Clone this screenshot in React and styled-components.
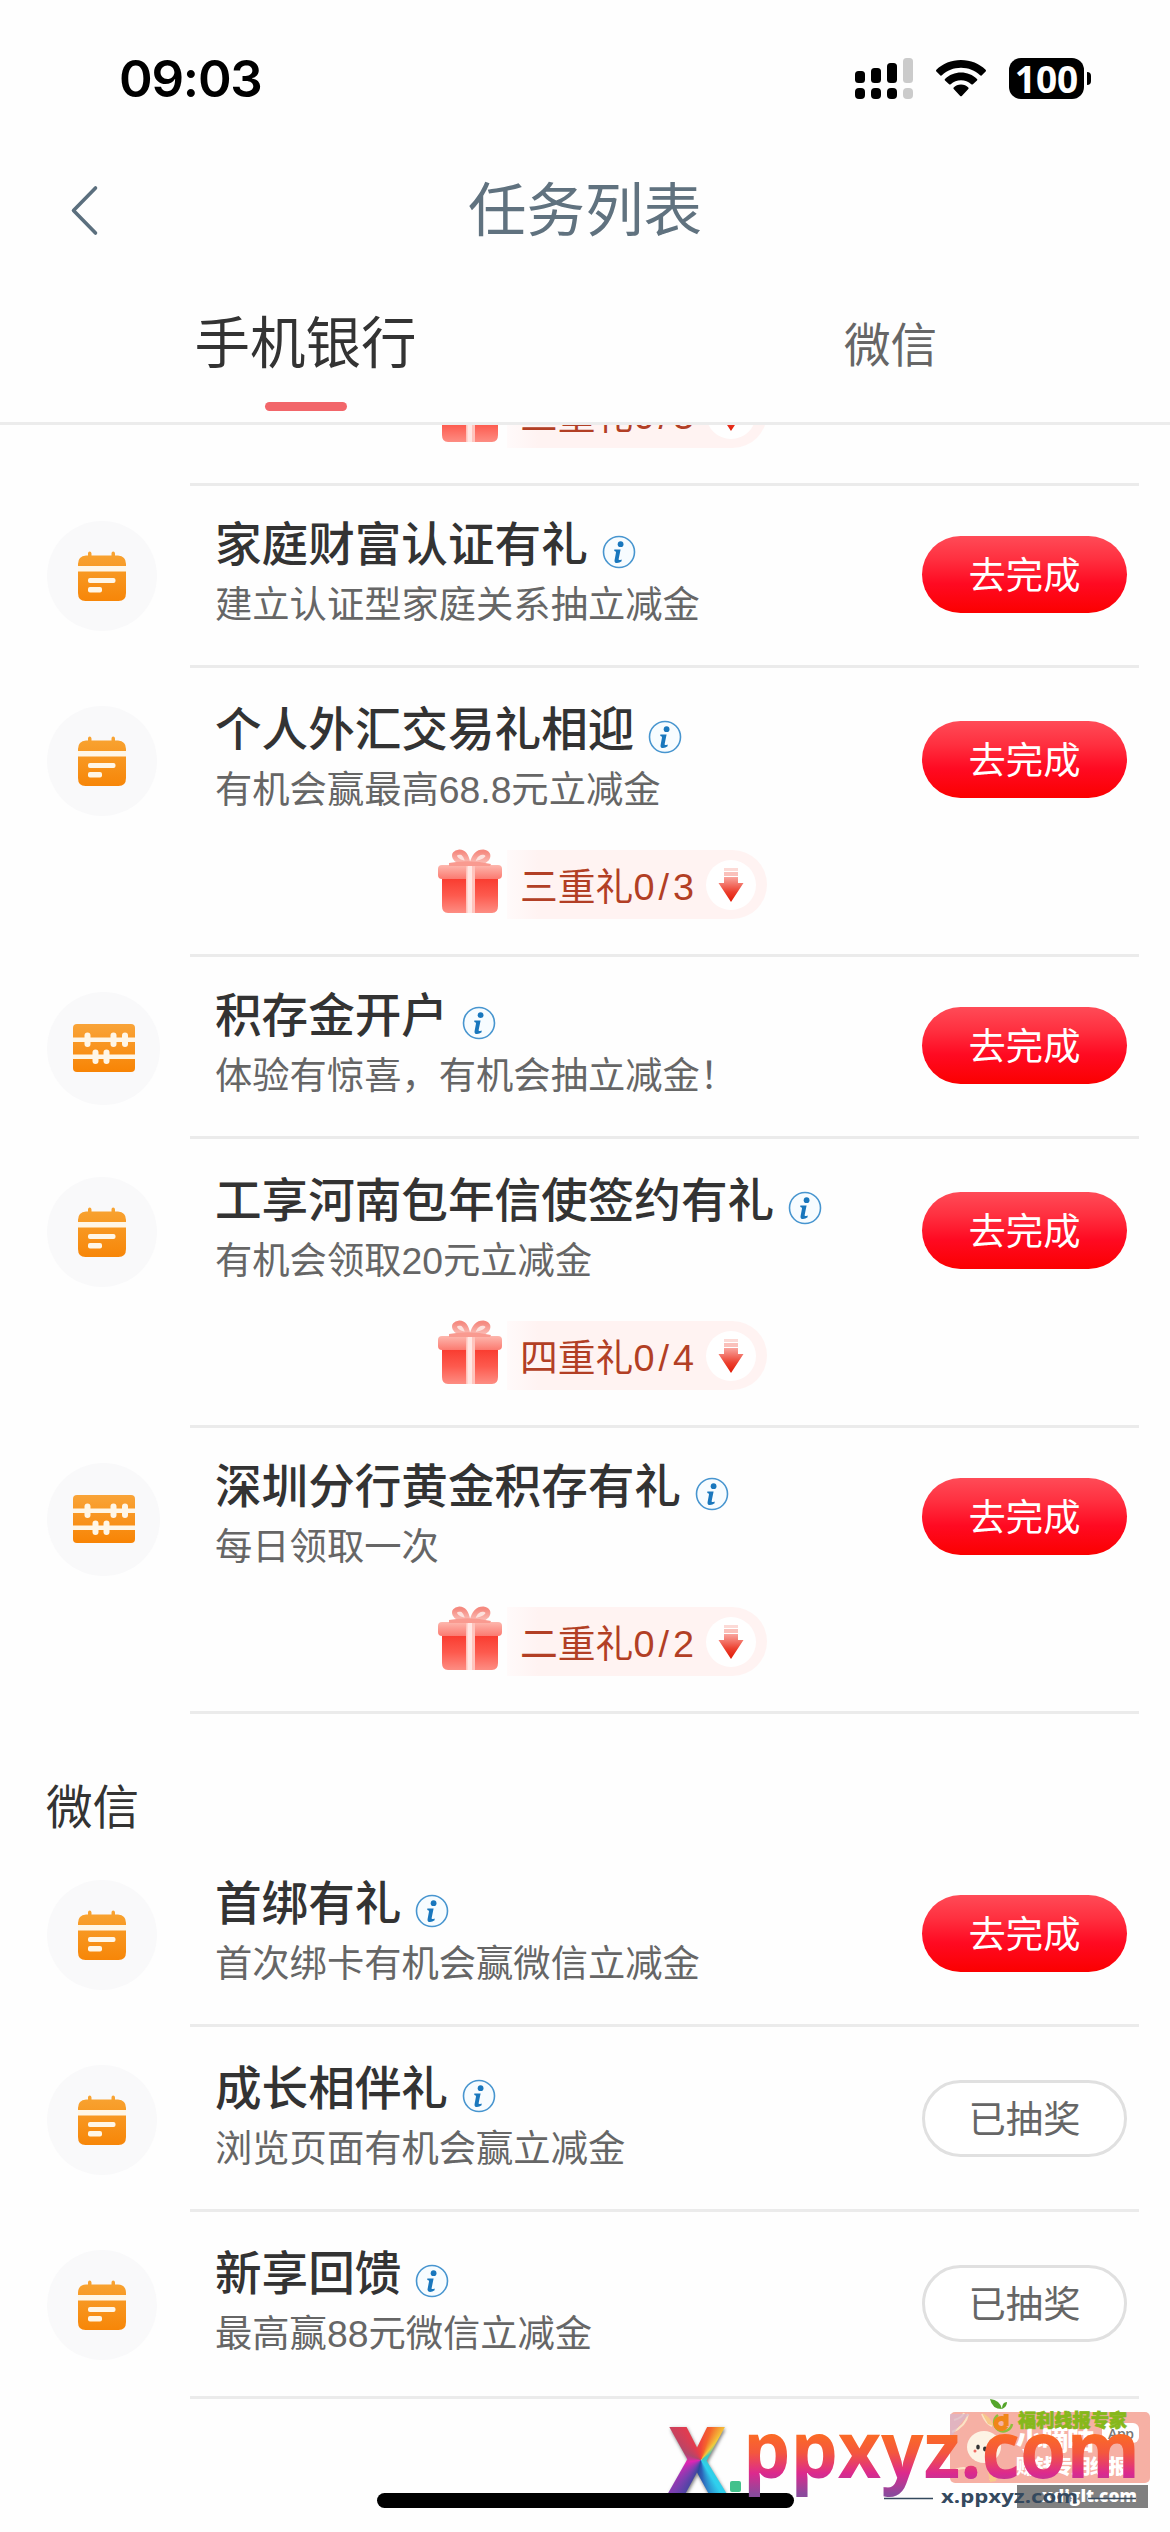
import styled, { createGlobalStyle } from 'styled-components';

const GlobalStyle = createGlobalStyle`
  * {
    box-sizing: border-box;
  }

  body {
    margin: 0;
    background-color: #fefefe;
    font-family: 'Liberation Sans', 'Noto Sans CJK SC', sans-serif;
    color: #333;
  }
`;

const Screen = styled.div`
  position: relative;
  width: 1170px;
  height: 2532px;
  overflow: hidden;
  display: flex;
  flex-direction: column;
  background-color: #fefefe;
`;

const Header = styled.header`
  height: 425px;
  flex-shrink: 0;
  border-bottom: 3px solid #ececec;
`;

const StatusBar = styled.div`
  height: 156px;
  padding: 0 79px 0 119px;
  display: flex;
  align-items: center;
  justify-content: space-between;
`;

const Clock = styled.span`
  font-family: Inter, sans-serif;
  font-size: 51px;
  font-weight: 600;
  letter-spacing: -1.2px;
  color: #000;
`;

const StatusIcons = styled.div`
  display: flex;
  align-items: center;
  gap: 23px;

  svg {
    display: block;
  }
`;

const Battery = styled.div`
  display: flex;
  align-items: center;
  gap: 3px;
`;

const BatteryBody = styled.div`
  width: 75px;
  height: 41px;
  border-radius: 12px;
  background-color: #000;
  color: #fff;
  font-family: 'Open Sans', sans-serif;
  font-size: 37px;
  font-weight: 700;
  line-height: 41px;
  text-align: center;
`;

const BatteryTip = styled.div`
  width: 4px;
  height: 13px;
  border-radius: 0 6px 6px 0;
  background-color: #000;
`;

const NavBar = styled.div`
  height: 110px;
  display: grid;
  grid-template-columns: 1fr auto 1fr;
  align-items: center;
  padding: 0 70px;

  svg {
    margin-bottom: 2px;
  }
`;

const PageTitle = styled.h1`
  margin: 0;
  font-size: 58.5px;
  font-weight: 400;
  line-height: 84px;
  color: #60727f;
`;

const Tabs = styled.div`
  display: flex;
  height: 156px;
  padding: 38px 0 0 13px;
`;

const Tab = styled.div`
  width: 585px;
  flex-shrink: 0;
  display: flex;
  flex-direction: column;
  align-items: center;
  font-size: ${(props) => (props.$active ? '55.5px' : '46.6px')};
  line-height: ${(props) => (props.$active ? '80px' : '85px')};
  color: ${(props) => (props.$active ? '#333' : '#666')};
`;

const TabLine = styled.div`
  width: 82px;
  height: 9px;
  margin-top: 18px;
  border-radius: 5px;
  background-color: #f2666a;
`;

const List = styled.main`
  flex: 1;
  overflow: hidden;
`;

const Row = styled.div`
  display: flex;
`;

const IconColumn = styled.div`
  width: 190px;
  flex-shrink: 0;
  padding: ${(props) => props.$top}px 0 0 47px;
`;

const IconCircle = styled.div`
  width: ${(props) => (props.$wide ? 113 : 110)}px;
  height: ${(props) => (props.$wide ? 113 : 110)}px;
  border-radius: 50%;
  background-color: #f9f9fa;
  display: flex;
  align-items: center;
  justify-content: center;
`;

const RowBody = styled.div`
  flex: 1;
  height: ${(props) => props.$height}px;
  margin-right: 31px;
  padding: ${(props) => props.$top}px 12px 0 25px;
  border-bottom: 3px solid #ebebeb;
`;

const RowMain = styled.div`
  display: flex;
  justify-content: space-between;
  height: 110px;
`;

const TaskName = styled.div`
  display: flex;
  align-items: center;
  gap: 14px;
  height: 54px;
  margin-top: -8px;
  font-size: 46.6px;
  font-weight: 500;
  color: #333;

  svg {
    margin-top: 23px;
  }
`;

const TaskDesc = styled.div`
  margin-top: 6px;
  line-height: 64px;
  font-size: 37.3px;
  color: #666;
`;

const ActionButton = styled.button`
  width: 205px;
  height: 77px;
  margin-top: 15px;
  padding: 0 0 3px;
  border-radius: 39px;
  font-family: inherit;
  font-size: 37.3px;
  border: ${(props) => (props.$done ? '3px solid #e0e0e0' : 'none')};
  color: ${(props) => (props.$done ? '#666' : '#fff')};
  background: ${(props) =>
    props.$done ? '#fff' : 'linear-gradient(180deg, #ff4b57 0%, #ff3040 30%, #ff0a22 62%, #fb0000 100%)'};
`;

const GiftRow = styled.div`
  display: flex;
  align-items: center;
  width: 330px;
  height: 69px;
  margin: ${(props) => props.$top}px 0 0 222px;

  > svg {
    margin-bottom: 5px;
  }
`;

const GiftPill = styled.div`
  flex: 1;
  display: flex;
  align-items: center;
  justify-content: space-between;
  height: 69px;
  margin-left: 4px;
  padding: 0 11px 0 13px;
  border-radius: 0 35px 35px 0;
  background: linear-gradient(90deg, #fffafa 0%, #fff3f2 12%, #fff3f2 100%);
  font-size: 37.8px;
  color: #b23f25;
`;

const GiftText = styled.span`
  margin-bottom: 3px;
  white-space: nowrap;
`;

const Count = styled.span`
  letter-spacing: 4px;
`;

const ArrowCircle = styled.div`
  width: 50px;
  height: 50px;
  flex-shrink: 0;
  border-radius: 50%;
  background-color: #fff;
  display: flex;
  align-items: center;
  justify-content: center;
`;

const SectionTitle = styled.h2`
  height: 129px;
  margin: 0;
  padding: 59px 0 0 46px;
  font-size: 46.6px;
  font-weight: 400;
  line-height: 70px;
  color: #333;
`;

const HomeIndicator = styled.div`
  position: absolute;
  left: 377px;
  bottom: 24px;
  width: 417px;
  height: 15px;
  border-radius: 8px;
  background-color: #000;
`;

const Watermark = styled.div`
  position: absolute;
  left: 660px;
  top: 2396px;
  width: 510px;
  height: 130px;
`;

const BigX = styled.span`
  position: absolute;
  left: 8px;
  top: 12px;
  font-family: 'Open Sans', sans-serif;
  font-size: 92px;
  font-weight: 800;
  line-height: 100px;
  transform: scaleX(0.88);
  transform-origin: left center;
  color: transparent;
  background: conic-gradient(
    from 0deg at 56% 52%,
    #f0453a 0deg,
    #f5642c 20deg,
    #f3c93a 42deg,
    #3cc7c0 60deg,
    #2fd0ee 145deg,
    #2c62b8 175deg,
    #2b4a9c 195deg,
    #7b3fb0 225deg,
    #e224b4 262deg,
    #b0476c 290deg,
    #e03c50 330deg,
    #f0453a 360deg
  );
  background-clip: text;
  -webkit-background-clip: text;
  filter: drop-shadow(1px 2px 2px rgba(0, 0, 0, 0.5));
`;

const SignalIcon = () => (
  <svg width="58" height="41" viewBox="0 0 58 41">
    <g fill="#000">
      <rect x="0" y="13" width="10" height="12" rx="3.5" />
      <rect x="16" y="10" width="10" height="15" rx="3.5" />
      <rect x="32" y="5" width="10" height="20" rx="3.5" />
      <rect x="0" y="30" width="10" height="11" rx="4" />
      <rect x="16" y="30" width="10" height="11" rx="4" />
      <rect x="32" y="30" width="10" height="11" rx="4" />
    </g>
    <g fill="#cbcbcb">
      <rect x="48" y="0" width="10" height="25" rx="3.5" />
      <rect x="48" y="30" width="10" height="11" rx="4" />
    </g>
  </svg>
);

const WifiIcon = () => (
  <svg width="50" height="37" viewBox="0 0 50 37">
    <path d="M25 0C34.600 0 43.400 3.600 49.600 9.800Q50.400 10.700 49.600 11.600L45.600 15.400Q44.900 16 44.100 15.300C39 10.400 32.300 7.700 25 7.700S11 10.400 5.900 15.300Q5.100 16 4.400 15.400L.4 11.600Q-.4 10.700.4 9.800C6.600 3.600 15.400 0 25 0Z" />
    <path d="M25 12.600C31 12.600 36.800 14.900 41 18.900Q41.800 19.700 41 20.600L36.900 24.300Q36.100 24.900 35.300 24.300C32.400 21.800 28.900 20.300 25 20.300S17.600 21.800 14.700 24.300Q13.900 24.900 13.100 24.300L9 20.600Q8.200 19.700 9 18.900C13.200 14.900 19 12.600 25 12.600Z" />
    <path d="M25 24.600C27.900 24.600 30.500 25.800 32.300 27.600Q33 28.300 32.300 29.100L25.800 35.900Q25 36.800 24.200 35.900L17.700 29.100Q17 28.300 17.700 27.600C19.500 25.800 22.100 24.600 25 24.600Z" />
  </svg>
);

const BackIcon = () => (
  <svg width="30" height="56" viewBox="0 0 30 56" fill="none" stroke="#5b6f7e" strokeWidth="3.6" strokeLinecap="round" strokeLinejoin="round">
    <path d="M25.500 6L3.500 28.500L25.500 51" />
  </svg>
);

const InfoIcon = () => (
  <svg width="34" height="34" viewBox="0 0 34 34">
    <circle cx="17" cy="17" r="15.500" fill="#f7fcff" stroke="#4795cf" strokeWidth="1.6" />
    <circle cx="18.600" cy="9.200" r="2.900" fill="#1977bd" />
    <path d="M12.300 14.400H18.600L16.600 24.300Q16.500 25.700 19.600 24.400V26.200Q17.500 28 15 28Q12 28 12.600 24.900L14 17.500Q14.200 15.900 12.300 15.900Z" fill="#1977bd" />
  </svg>
);

const CalendarIcon = () => (
  <svg width="50" height="52" viewBox="0 0 50 52">
    <defs>
      <linearGradient id="calendar" x1="0" y1="0" x2="0" y2="1">
        <stop offset="0" stopColor="#f8a433" />
        <stop offset="1" stopColor="#f78608" />
      </linearGradient>
    </defs>
    <path
      d="M11 5.500V3.500Q11 1.500 12.700 1.500T14.500 3.500V5.500H34.500V3.500Q34.500 1.500 36.200 1.500T38 3.500V5.500H41Q49 6 49 14V43Q49 51 41.500 51H8.500Q1 51 1 43V14Q1 6 9 5.500Z"
      fill="url(#calendar)"
    />
    <path d="M1 16H49V21.500H1Z" fill="#fff6e6" />
    <rect x="11" y="28" width="27.500" height="5" rx="2" fill="#fff6e6" />
    <rect x="11" y="37" width="14" height="5.500" rx="2" fill="#fff6e6" />
  </svg>
);

const AbacusIcon = () => (
  <svg width="62" height="50" viewBox="0 0 62 50">
    <defs>
      <linearGradient id="abacus" x1="0" y1="0" x2="0" y2="1">
        <stop offset="0" stopColor="#f9a438" />
        <stop offset="1" stopColor="#f88404" />
      </linearGradient>
    </defs>
    <rect x="0" y="0" width="62" height="48" rx="4" fill="url(#abacus)" />
    <g fill="#fff6e6">
      <rect x="0" y="13.500" width="62" height="4.500" />
      <rect x="0" y="30.500" width="62" height="4.500" />
      <rect x="11.500" y="8.500" width="6" height="14.500" rx="3" />
      <rect x="37.500" y="8.500" width="6" height="14.500" rx="3" />
      <rect x="49" y="8.500" width="6" height="14.500" rx="3" />
      <rect x="19.500" y="25.500" width="6" height="14.500" rx="3" />
      <rect x="30.500" y="25.500" width="6" height="14.500" rx="3" />
    </g>
  </svg>
);

const GiftIcon = () => (
  <svg width="66" height="68" viewBox="0 0 66 68">
    <defs>
      <linearGradient id="giftBox" x1="0" y1="0" x2="0" y2="1">
        <stop offset="0" stopColor="#f93b2f" />
        <stop offset="0.500" stopColor="#fd5a4e" />
        <stop offset="1" stopColor="#fd8d83" />
      </linearGradient>
      <linearGradient id="giftLid" x1="0" y1="0" x2="0" y2="1">
        <stop offset="0" stopColor="#fdb7ae" />
        <stop offset="1" stopColor="#fb7a70" />
      </linearGradient>
      <linearGradient id="giftBow" x1="0" y1="0" x2="0" y2="1">
        <stop offset="0" stopColor="#f58a80" />
        <stop offset="1" stopColor="#fbc0b9" />
      </linearGradient>
    </defs>
    <path d="M5 30H61V58Q61 65 55 65H11Q5 65 5 58Z" fill="url(#giftBox)" />
    <rect x="1" y="17" width="64" height="14" rx="4" fill="url(#giftLid)" />
    <path d="M29 17H38V65H29Z" fill="#ffc4bd" />
    <path d="M30.500 17H35V65H30.500Z" fill="#fff0ed" opacity="0.8" />
    <g fill="#fde0dc" stroke="url(#giftBow)" strokeWidth="5">
      <path d="M31 16Q29 4 22.500 4Q16 5 18 9.500Q20 14 31 16" />
      <path d="M35 16Q38 4 46 4Q53 5.500 50 10.500Q46 15 35 16" />
    </g>
    <path d="M12 15Q33 11 54 16L53 18H12Z" fill="#f99a90" />
  </svg>
);

const DownIcon = () => (
  <svg width="28" height="36" viewBox="0 0 28 36">
    <defs>
      <linearGradient id="down" x1="0" y1="0" x2="0" y2="1">
        <stop offset="0" stopColor="#f9a59e" />
        <stop offset="0.600" stopColor="#ec3f2e" />
        <stop offset="1" stopColor="#e01a05" />
      </linearGradient>
    </defs>
    <rect x="7" y="1" width="14" height="3" fill="#fcdad6" />
    <rect x="7" y="5" width="14" height="4" fill="#fac1bb" />
    <path d="M7 10H21V16H26.500L14 35L1.500 16H7Z" fill="url(#down)" />
  </svg>
);

const SiteMark = () => (
  <Watermark>
    <svg width="510" height="130" viewBox="0 0 510 130">
      <defs>
        <linearGradient id="siteText" gradientUnits="userSpaceOnUse" x1="0" y1="39" x2="0" y2="98">
          <stop offset="0" stopColor="#fb6a26" />
          <stop offset="0.300" stopColor="#f4573d" />
          <stop offset="0.650" stopColor="#dc2a8e" />
          <stop offset="1" stopColor="#8b4a9c" />
        </linearGradient>
      </defs>
      <rect x="290" y="16" width="200" height="71" rx="5" fill="#f6b0a4" />
      <g fill="none" stroke="#fbe3c5" strokeWidth="2">
        <path d="M292 36Q306 30 308 18M294 24Q302 22 304 17M292 76Q304 68 314 76M330 84Q338 74 330 66M322 18Q326 28 332 30" />
      </g>
      <path d="M322 17Q330 20 334 30L328 28ZM326 66Q338 72 336 85L330 86Z" fill="#f8c98a" />
      <path d="M290 18H310Q300 26 290 44Z" fill="#d9b6cc" opacity="0.7" />
      <ellipse cx="324" cy="51" rx="17" ry="16" fill="#fdf3e4" />
      <ellipse cx="318" cy="51" rx="1.800" ry="2.600" fill="#333" />
      <ellipse cx="325" cy="53" rx="2" ry="2.400" fill="#333" />
      <circle cx="315" cy="55" r="1.500" fill="#ee6a62" />
      <rect x="442" y="27" width="37" height="20" rx="6" fill="#fff" />
      <text x="356" y="54" fontSize="27" fontWeight="900" fill="#fff" textLength="78">小嘀咕</text>
      <text x="448" y="43" fontSize="14" fontFamily="Open Sans" fontWeight="600" fill="#777" textLength="26">App</text>
      <text x="356" y="78" fontSize="20" fontWeight="900" fill="#fff" textLength="112">赚钱专用线报</text>
      <text x="358" y="31" fontSize="18.500" fontWeight="900" fill="#86b81b" stroke="#86b81b" strokeWidth="0.700" textLength="109" lengthAdjust="spacingAndGlyphs">福利线报专家</text>
      <path d="M338 19A9 9 0 1 0 352 28" fill="none" stroke="#8cc03a" strokeWidth="2.500" />
      <path d="M346 18V30M346 25A5.500 5 0 1 0 346 30" fill="none" stroke="#f08619" strokeWidth="5" />
      <path d="M330 3Q340 4 342 13Q332 13 330 3ZM342 13Q342 6 347 6Q347 11 342 13Z" fill="#54a52a" />
      <text
        x="83"
        y="82"
        fontSize="79"
        fontFamily="Open Sans"
        fontWeight="700"
        fill="url(#siteText)"
        textLength="397"
        lengthAdjust="spacingAndGlyphs"
      >
        ppxyz.com
      </text>
      <rect x="70" y="85" width="11" height="11" rx="2" fill="#42c18c" />
      <rect x="357" y="89" width="131" height="23" fill="#808080" />
      <text x="382" y="106" fontSize="17" fontFamily="Open Sans" fontWeight="800" fill="#fff" textLength="95" lengthAdjust="spacingAndGlyphs">xdiglt.com</text>
      <text x="281" y="107" fontSize="18.500" fontFamily="Open Sans" fontWeight="700" fill="#34495e" textLength="137" lengthAdjust="spacingAndGlyphs">x.ppxyz.com</text>
      <path d="M224 102.500H273M428 102.500H476" stroke="#34495e" strokeWidth="1.500" />
    </svg>
    <BigX>X</BigX>
  </Watermark>
);

const bankTasks = [
  { name: '家庭财富认证有礼', desc: '建立认证型家庭关系抽立减金', top: 35, height: 182 },
  { name: '个人外汇交易礼相迎', desc: '有机会赢最高68.8元立减金', top: 38, height: 289, gift: '三重礼', count: '0/3' },
  { name: '积存金开户', desc: '体验有惊喜，有机会抽立减金！', top: 35, height: 182, abacus: true },
  { name: '工享河南包年信使签约有礼', desc: '有机会领取20元立减金', top: 38, height: 289, gift: '四重礼', count: '0/4' },
  { name: '深圳分行黄金积存有礼', desc: '每日领取一次', top: 35, height: 286, gift: '二重礼', count: '0/2', abacus: true },
];

const wechatTasks = [
  { name: '首绑有礼', desc: '首次绑卡有机会赢微信立减金', top: 37, height: 184 },
  { name: '成长相伴礼', desc: '浏览页面有机会赢立减金', top: 38, height: 185, done: true },
  { name: '新享回馈', desc: '最高赢88元微信立减金', top: 38, height: 187, done: true },
];

const Gift = ({ label, count, top }) => (
  <GiftRow $top={top}>
    <GiftIcon />
    <GiftPill>
      <GiftText>
        {label}
        <Count>{count}</Count>
      </GiftText>
      <ArrowCircle>
        <DownIcon />
      </ArrowCircle>
    </GiftPill>
  </GiftRow>
);

const Task = ({ task }) => (
  <Row>
    <IconColumn $top={task.top}>
      <IconCircle $wide={task.abacus}>{task.abacus ? <AbacusIcon /> : <CalendarIcon />}</IconCircle>
    </IconColumn>
    <RowBody $top={task.top} $height={task.height}>
      <RowMain>
        <div>
          <TaskName>
            {task.name}
            <InfoIcon />
          </TaskName>
          <TaskDesc>{task.desc}</TaskDesc>
        </div>
        <ActionButton $done={task.done}>{task.done ? '已抽奖' : '去完成'}</ActionButton>
      </RowMain>
      {task.gift && <Gift label={task.gift} count={task.count} top={34} />}
    </RowBody>
  </Row>
);

const App = () => {
  return (
    <Screen>
      <GlobalStyle />
      <Header>
        <StatusBar>
          <Clock>09:03</Clock>
          <StatusIcons>
            <SignalIcon />
            <WifiIcon />
            <Battery>
              <BatteryBody>100</BatteryBody>
              <BatteryTip />
            </Battery>
          </StatusIcons>
        </StatusBar>
        <NavBar>
          <BackIcon />
          <PageTitle>任务列表</PageTitle>
        </NavBar>
        <Tabs>
          <Tab $active>
            手机银行
            <TabLine />
          </Tab>
          <Tab>微信</Tab>
        </Tabs>
      </Header>
      <List>
        <Row>
          <IconColumn $top={0} />
          <RowBody $top={0} $height={61}>
            <Gift label="三重礼" count="0/3" top={-46} />
          </RowBody>
        </Row>
        {bankTasks.map((task) => (
          <Task key={task.name} task={task} />
        ))}
        <SectionTitle>微信</SectionTitle>
        {wechatTasks.map((task) => (
          <Task key={task.name} task={task} />
        ))}
      </List>
      <HomeIndicator />
      <SiteMark />
    </Screen>
  );
};

export default App;
